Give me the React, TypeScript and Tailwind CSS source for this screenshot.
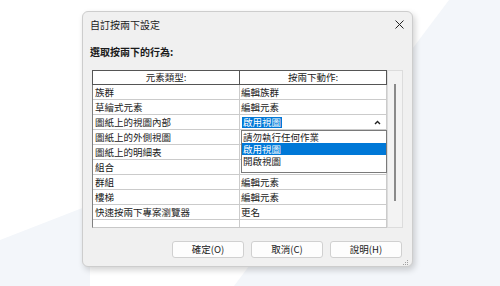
import React from 'react';

const rows: [string, string][] = [
  ['族群', '編輯族群'],
  ['草繪式元素', '編輯元素'],
  ['圖紙上的視圖內部', 'combo'],
  ['圖紙上的外側視圖', ''],
  ['圖紙上的明細表', ''],
  ['組合', ''],
  ['群組', '編輯元素'],
  ['樓梯', '編輯元素'],
  ['快速按兩下專案瀏覽器', '更名'],
];

const options = ['請勿執行任何作業', '啟用視圖', '開啟視圖'];

function ComboCell() {
  return (
    <div className="relative flex h-full items-center justify-between pl-[1px] pr-[5px]">
      <span className="bg-[#0078d7] px-[1px] leading-[11px] text-white">啟用視圖</span>
      <svg width="7" height="5" viewBox="0 0 7 5" className="mt-[1px]">
        <path d="M1 4 L3.5 1.5 L6 4" fill="none" stroke="#222" strokeWidth="1.4" />
      </svg>
      <div className="absolute left-0 top-[15px] z-10 h-[43px] w-[146px] border border-[#7a7a7a] bg-white">
        {options.map((o, i) => (
          <div
            key={o}
            className={
              'h-[12px] pl-[1px] leading-[12px] ' + (i === 1 ? 'bg-[#0078d7] text-white' : 'text-[#1a1a1a]')
            }
          >
            {o}
          </div>
        ))}
      </div>
    </div>
  );
}

function Btn({ label }: { label: string }) {
  return (
    <button className="flex h-[17px] w-[72px] items-center justify-center rounded-[3px] border border-[#d0d0d0] bg-[#fdfdfd] text-[9.5px] text-[#1a1a1a]">
      {label}
    </button>
  );
}

export default function App() {
  return (
    <div className="relative h-[286px] w-[500px] overflow-hidden bg-white font-['Noto_Sans_CJK_TC','Noto_Sans',sans-serif] text-[#1a1a1a]">
      <svg className="absolute inset-0" width="500" height="286">
        <polygon points="449,0 500,0 500,286 234,286" fill="#f3f6fa" />
        <polygon points="0,240 90,205 90,286 0,286" fill="#f3f6fa" />
      </svg>

      <div className="relative pl-[82px] pt-[11px]">
        <div className="flex h-[256px] w-[331px] flex-col rounded-[6px] border border-[#cdcdcd] bg-[#f0f0f0] shadow-[2px_3px_6px_rgba(0,0,0,0.18)]">
          {/* title bar */}
          <div className="flex h-[24px] items-center justify-between pl-[7px] pr-[8px] text-[10px]">
            <span>自訂按兩下設定</span>
            <svg width="9" height="9" viewBox="0 0 9 9">
              <path d="M0.5 0.5 L8.5 8.5 M8.5 0.5 L0.5 8.5" stroke="#222" strokeWidth="1" />
            </svg>
          </div>

          <div className="pl-[7px] pt-[10px] text-[10px] font-semibold leading-[12px]">選取按兩下的行為:</div>

          {/* grid */}
          <div className="ml-[9px] mt-[12px] flex h-[158px] w-[311px] text-[9.5px]">
            <div className="flex w-[295px] flex-col bg-white">
              <div className="flex h-[15px] shrink-0 leading-[13px]">
                <div className="w-[148px] border border-[#555] text-center">元素類型:</div>
                <div className="w-[147px] border-y border-r border-[#555] text-center">按兩下動作:</div>
              </div>
              <div className="flex flex-1 flex-col border-b border-l border-[#c8c8c8] border-l-[#808080]">
                {rows.map(([a, b]) => (
                  <div key={a} className="flex h-[15px] shrink-0 border-b border-[#cbcbcb] leading-[14px]">
                    <div className="w-[147px] border-r border-[#cbcbcb] pl-[2px]">{a}</div>
                    <div className="w-[147px] border-r border-[#cbcbcb] pl-[1px]">
                      {b === 'combo' ? <ComboCell /> : b}
                    </div>
                  </div>
                ))}
                <div className="flex flex-1">
                  <div className="w-[147px] border-r border-[#cbcbcb]" />
                  <div className="w-[147px] border-r border-[#cbcbcb]" />
                </div>
              </div>
            </div>
            <div className="w-[16px] border-x border-y border-[#dcdcdc] bg-[#f3f3f3]">
              <div className="mx-auto mt-[13px] h-[117px] w-[2px] bg-[#8a8a8a]" />
            </div>
          </div>

          {/* buttons */}
          <div className="mt-[13px] flex justify-end gap-[7px] pr-[10px]">
            <Btn label="確定(O)" />
            <Btn label="取消(C)" />
            <Btn label="說明(H)" />
          </div>

          <div className="flex justify-end pr-[3px] pt-[1px]">
            <svg width="7" height="7" viewBox="0 0 7 7">
              <rect x="5" y="1" width="1" height="1" fill="#a0a0a0" />
              <rect x="3" y="3" width="1" height="1" fill="#a0a0a0" />
              <rect x="5" y="3" width="1" height="1" fill="#a0a0a0" />
              <rect x="1" y="5" width="1" height="1" fill="#a0a0a0" />
              <rect x="3" y="5" width="1" height="1" fill="#a0a0a0" />
              <rect x="5" y="5" width="1" height="1" fill="#a0a0a0" />
            </svg>
          </div>
        </div>
      </div>
    </div>
  );
}
